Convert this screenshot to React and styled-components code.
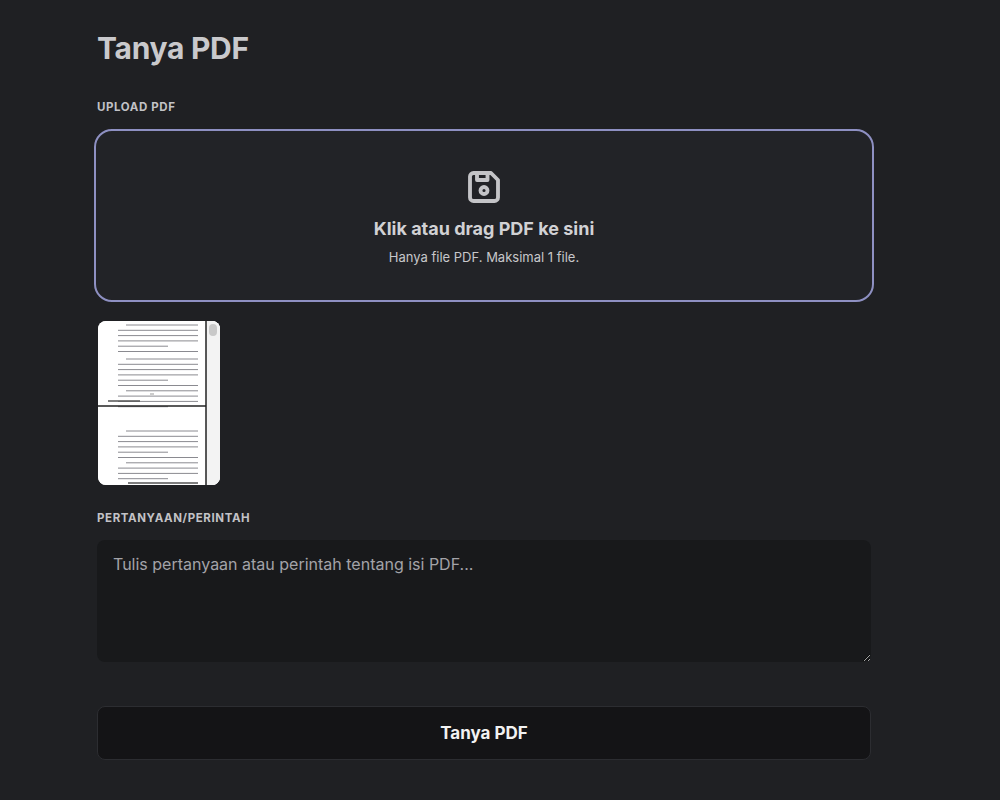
import React from 'react'
import styled, { createGlobalStyle } from 'styled-components'

const Global = createGlobalStyle`
  body { margin: 0; background: #1f2023; font-family: Inter, "Noto Sans", sans-serif; color: #d4d4d6; }
`

const Page = styled.div`
  width: 780px;
  margin-left: 94px;
  padding-top: 30px;
  display: flex;
  flex-direction: column;
`

const Title = styled.h1`
  margin: 0 0 0 3px;
  font-size: 30px;
  font-weight: 700;
  color: #c9c9cc;
  letter-spacing: -0.3px;
`

const Label = styled.div`
  margin: ${p => p.top || 30}px 0 15px 3px;
  font-size: 11.5px;
  font-weight: 700;
  letter-spacing: 0.6px;
  color: #c2c2c6;
`

const Drop = styled.div`
  height: 169px;
  border: 2px solid #8e90c2;
  border-radius: 18px;
  background: #222327;
  display: flex;
  flex-direction: column;
  align-items: center;
  justify-content: center;
`

const DropTitle = styled.div`
  margin-top: 10px;
  font-size: 18px;
  font-weight: 700;
  color: #d1d1d4;
`

const DropSub = styled.div`
  margin-top: 10px;
  font-size: 13px;
  color: #c7c7ca;
`

const Thumb = styled.div`
  margin: 19px 0 0 4px;
  width: 122px;
  height: 164px;
  border-radius: 8px;
  overflow: hidden;
  background: #fff;
  display: flex;
`

const Textarea = styled.textarea`
  margin-left: 3px;
  width: 774px;
  height: 122px;
  box-sizing: border-box;
  background: #18191b;
  border: none;
  border-radius: 8px;
  padding: 14px 16px;
  font-family: Inter, "Noto Sans", sans-serif;
  font-size: 16px;
  color: #ddd;
  &::placeholder { color: #a3a3a8; }
`

const Button = styled.button`
  margin: 44px 0 0 3px;
  width: 774px;
  height: 54px;
  background: #141416;
  border: 1px solid #2c2d31;
  border-radius: 8px;
  color: #f2f2f2;
  font-family: Inter, "Noto Sans", sans-serif;
  font-size: 17px;
  font-weight: 700;
`

function Lines({ y0, n, x0 = 20 }) {
  const out = []
  for (let i = 0; i < n; i++) {
    out.push(<line key={i} x1={i % 6 === 0 ? x0 + 8 : x0} x2={i % 5 === 4 ? 70 : 100} y1={y0 + i * 5.3} y2={y0 + i * 5.3} stroke="#8a8a90" strokeWidth="1" />)
  }
  return out
}

export default function App() {
  return (
    <>
      <Global />
      <Page>
        <Title>Tanya PDF</Title>
        <Label top={34}>UPLOAD PDF</Label>
        <Drop>
          <svg width="42" height="42" viewBox="0 0 24 24" fill="none" stroke="#c4c4c7" strokeWidth="2.2" strokeLinecap="round" strokeLinejoin="round">
            <path d="M6 4h10l4 4v10a2 2 0 0 1-2 2H6a2 2 0 0 1-2-2V6a2 2 0 0 1 2-2" />
            <circle cx="12" cy="14" r="2" />
            <path d="M14 4v4H8V4" />
          </svg>
          <DropTitle>Klik atau drag PDF ke sini</DropTitle>
          <DropSub>Hanya file PDF. Maksimal 1 file.</DropSub>
        </Drop>
        <Thumb>
          <svg width="122" height="164" viewBox="0 0 122 164">
            <rect width="122" height="164" fill="#fff" />
            <Lines y0={4} n={6} />
            <Lines y0={38} n={10} />
            <line x1="52" x2="56" y1="73" y2="73" stroke="#999" strokeWidth="1" />
            <line x1="10" x2="42" y1="80" y2="80" stroke="#555" strokeWidth="1.4" />
            <line x1="0" x2="108" y1="85" y2="85" stroke="#222" strokeWidth="1.5" />
            <Lines y0={110} n={10} />
            <line x1="30" x2="100" y1="162" y2="162" stroke="#555" strokeWidth="1.4" />
            <rect x="108" y="0" width="14" height="164" fill="#f3f3f3" />
            <line x1="108" x2="108" y1="0" y2="164" stroke="#222" strokeWidth="1.5" />
            <rect x="111" y="3" width="8" height="12" rx="4" fill="#c9c9c9" />
          </svg>
        </Thumb>
        <Label top={26}>PERTANYAAN/PERINTAH</Label>
        <Textarea placeholder="Tulis pertanyaan atau perintah tentang isi PDF..." />
        <Button>Tanya PDF</Button>
      </Page>
    </>
  )
}
